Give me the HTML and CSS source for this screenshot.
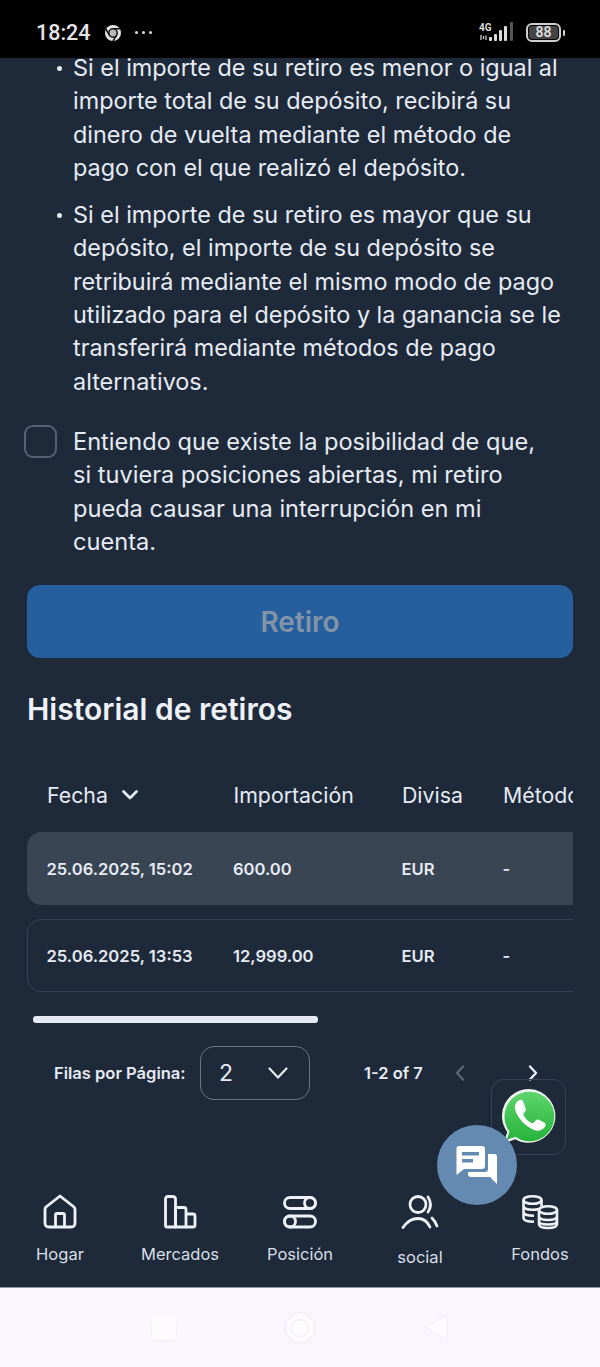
FILE: index.html
```html
<!doctype html>
<html lang="es">
  <head>
    <meta charset="UTF-8" />
    <meta name="viewport" content="width=device-width, initial-scale=1.0" />
    <title>Retiro</title>
    <link rel="stylesheet" href="styles.css">
  </head>
  <body>
    <div class="screen">
      <div class="status-bar">
        <div class="status-left">
          <span class="clock">18:24</span>
          <svg class="chrome-icon" width="18" height="18" viewBox="0 0 18 18">
            <circle cx="9" cy="9" r="8" fill="#e2e2e2" />
            <path d="M9 4.800 H16.400 M5.400 11.100 L1.700 4.800 M12.600 11.100 L8.900 17.400" stroke="#111" stroke-width="1.500" />
            <circle cx="9" cy="9" r="4.200" fill="#b8b8b8" stroke="#111" stroke-width="1.500" />
          </svg>
          <span class="dots"><i></i><i></i><i></i></span>
        </div>
        <div class="status-right">
          <svg width="38" height="22" viewBox="0 0 38 22">
            <text x="0" y="8.500" class="net-label">4G</text>
            <path d="M2 13 v5 M4.500 14 v3 M7 13.500 v4.500" stroke="#ccc" stroke-width="1.300" />
            <rect x="10" y="15" width="3" height="4" rx="1" fill="#ddd" />
            <rect x="15" y="12" width="3" height="7" rx="1" fill="#ddd" />
            <rect x="20" y="8" width="3" height="11" rx="1" fill="#ddd" />
            <rect x="25" y="4" width="3" height="15" rx="1" fill="#ddd" />
            <rect x="31" y="0" width="3" height="19" rx="1" fill="#555" />
          </svg>
          <div class="battery"><span class="battery-level">88</span></div>
          <i class="battery-tip"></i>
        </div>
      </div>

      <main class="content">
        <ul class="notes">
          <li>Si el importe de su retiro es menor o igual al importe total de su depósito, recibirá su dinero de vuelta mediante el método de pago con el que realizó el depósito.</li>
          <li>Si el importe de su retiro es mayor que su depósito, el importe de su depósito se retribuirá mediante el mismo modo de pago utilizado para el depósito y la ganancia se le transferirá mediante métodos de pago alternativos.</li>
        </ul>

        <label class="confirm">
          <span class="checkbox"></span>
          <span class="confirm-text">Entiendo que existe la posibilidad de que, si tuviera posiciones abiertas, mi retiro pueda causar una interrupción en mi cuenta.</span>
        </label>

        <button class="submit">Retiro</button>

        <h2 class="history-title">Historial de retiros</h2>

        <div class="table-wrap">
          <div class="table-head table-grid">
            <div class="sort-cell">
              Fecha
              <svg width="18" height="12" viewBox="0 0 18 12" fill="none" stroke="#e6eaf2" stroke-width="2.800" stroke-linecap="round" stroke-linejoin="round"><path d="M2.500 2.500 L9 9 L15.500 2.500" /></svg>
            </div>
            <div>Importación</div>
            <div>Divisa</div>
            <div>Método</div>
          </div>
          <div class="table-row table-grid active">
            <div>25.06.2025, 15:02</div>
            <div>600.00</div>
            <div>EUR</div>
            <div>-</div>
          </div>
          <div class="table-row table-grid">
            <div>25.06.2025, 13:53</div>
            <div>12,999.00</div>
            <div>EUR</div>
            <div>-</div>
          </div>
        </div>

        <div class="scroll-track"><div class="scroll-thumb"></div></div>

        <div class="pagination">
          <span class="rows-label">Filas por Página:</span>
          <div class="rows-select">
            <span>2</span>
            <svg width="22" height="14" viewBox="0 0 22 14" fill="none" stroke="#e6eaf2" stroke-width="2.200" stroke-linecap="round" stroke-linejoin="round"><path d="M2.500 2.500 L11 11.500 L19.500 2.500" /></svg>
          </div>
          <span class="page-range">1-2 of 7</span>
          <svg class="page-prev" width="12" height="18" viewBox="0 0 12 18" fill="none" stroke="#5b6675" stroke-width="2.400" stroke-linecap="round" stroke-linejoin="round"><path d="M9 2.500 L3 9 L9 15.500" /></svg>
          <svg class="page-next" width="12" height="18" viewBox="0 0 12 18" fill="none" stroke="#e6eaf2" stroke-width="2.400" stroke-linecap="round" stroke-linejoin="round"><path d="M3 2.500 L9 9 L3 15.500" /></svg>
        </div>
      </main>

      <nav class="tabbar">
        <div class="tab">
          <svg width="36" height="36" viewBox="0 0 36 36" fill="none" stroke="#eef1f6" stroke-width="2.800" stroke-linejoin="round">
            <path d="M3 15.500 Q3 14 4 13 L18 2 L32 13 Q33 14 33 15.500 V29 Q33 33 29 33 H7 Q3 33 3 29 Z" />
            <path d="M13.500 33 V21 Q13.500 19.500 15 19.500 H21 Q22.500 19.500 22.500 21 V33" />
          </svg>
          <span>Hogar</span>
        </div>
        <div class="tab">
          <svg width="36" height="36" viewBox="0 0 36 36" fill="none" stroke="#eef1f6" stroke-width="2.800" stroke-linejoin="round">
            <path d="M3.500 5 Q3.500 2.500 6 2.500 H10 Q13.500 2.500 13.500 5 V33 H5 Q3.500 33 3.500 31.500 Z" />
            <path d="M13.500 33 V13.500 H22 Q24 13.500 24 15.500 V33 Z" />
            <path d="M24 20 H31 Q33 20 33 22 V31 Q33 33 31 33 H24" />
          </svg>
          <span>Mercados</span>
        </div>
        <div class="tab">
          <svg width="36" height="36" viewBox="0 0 36 36" fill="none" stroke="#eef1f6" stroke-width="2.800">
            <rect x="2.500" y="3.500" width="31" height="11" rx="5.500" />
            <circle cx="28" cy="9" r="5.500" />
            <rect x="2.500" y="22" width="31" height="11" rx="5.500" />
            <circle cx="8" cy="27.500" r="5.500" />
          </svg>
          <span>Posición</span>
        </div>
        <div class="tab tab-social">
          <svg width="38" height="36" viewBox="0 0 38 36" fill="none" stroke="#eef1f6" stroke-width="2.800" stroke-linecap="round">
            <circle cx="17" cy="10.500" r="8" />
            <path d="M27 3 Q32 10.500 27 18" />
            <path d="M2 33.500 Q8 24.500 17 24.500 Q25 24.500 29 33" />
            <path d="M31 24 Q34 27 36 32" />
          </svg>
          <span>social</span>
        </div>
        <div class="tab">
          <svg width="38" height="36" viewBox="0 0 38 36" fill="none" stroke="#eef1f6" stroke-width="2.600">
            <ellipse cx="11.500" cy="6" rx="9" ry="3.800" />
            <path d="M2.500 6 V24 Q2.500 27.500 13 27.800 M20.500 6 V12 M2.500 12 Q3 15.800 11.500 15.800 Q15 15.800 17.500 15 M2.500 18 Q3 21.800 13 21.800" />
            <ellipse cx="27" cy="16" rx="9" ry="3.800" />
            <path d="M18 16 V30 Q18 34 27 34 Q36 34 36 30 V16 M18 22 Q18 26 27 26 Q36 26 36 22 M18 27 Q18 30.500 27 30.500 Q36 30.500 36 27" />
          </svg>
          <span>Fondos</span>
        </div>
      </nav>

      <div class="system-nav">
        <i class="sys-square"></i>
        <svg width="34" height="34" viewBox="0 0 34 34" fill="none">
          <circle cx="17" cy="17" r="15" fill="#fdfafe" stroke="#f5eff6" stroke-width="2" />
          <circle cx="17" cy="17" r="8.500" fill="#fefdfe" stroke="#f5eff6" stroke-width="1.500" />
        </svg>
        <svg width="26" height="30" viewBox="0 0 26 30"><path d="M24 2 V28 L2 14 Z" fill="#fefbff" stroke="#f6f0f7" stroke-width="1.500" stroke-linejoin="round" /></svg>
      </div>

      <a class="whatsapp">
        <svg width="60" height="60" viewBox="0 0 58 58">
          <defs>
            <linearGradient id="wa-bg" x1="0" y1="0" x2="0" y2="1">
              <stop offset="0" stop-color="#5fd56d" />
              <stop offset="1" stop-color="#26b33a" />
            </linearGradient>
          </defs>
          <path d="M29 2 A26 26 0 1 1 15.500 50.500 L4 55 L8 43.500 A26 26 0 0 1 29 2 Z" fill="#eef5ee" />
          <path d="M29 4.500 A24 24 0 1 1 15.800 48.200 L7.500 51 L10.200 43 A24 24 0 0 1 29 4.500 Z" fill="url(#wa-bg)" />
          <path d="M20 12.500 C17 13.500 15 17 15.500 21 C16.500 28 25.500 39 35.500 42 C39.500 43 43.500 41 45 37.500 C45.500 36 45 35 44 34.500 L38 31.500 C37 31 36 31.500 35.500 32.300 L33.500 34.500 C33 35 32 35 31 34.500 C27.500 32.800 25.500 30.500 23.800 27.300 C23.300 26.400 23.500 25.800 24 25.300 L25.500 23.300 C26 22.700 26.200 22 25.800 21 L23.300 14 C22.800 12.700 21.300 12.200 20 12.500 Z" fill="#fff" />
        </svg>
      </a>

      <a class="chat-fab">
        <svg width="44" height="40" viewBox="0 0 44 40" fill="#fff">
          <path d="M4 1 H27 Q30 1 30 4 V21 Q30 24 27 24 H9 L1.500 30 V4 Q1.500 1 4 1 Z" />
          <path d="M33 9 H39 Q42 9 42 12 V39 L35 32 H16 Q13 32 13 29 V27 H30 Q33 27 33 24 Z" />
          <rect x="7" y="7" width="17" height="3.500" fill="#648ab1" />
          <rect x="7" y="14" width="11" height="3.500" fill="#648ab1" />
        </svg>
      </a>
    </div>
  </body>
</html>
```

FILE: styles.css
```css
* {
  box-sizing: border-box;
}
body {
  margin: 0;
  background-color: #1e2a3a;
  font-family: Inter, "Noto Sans", sans-serif;
  color: #e6eaf2;
}
.screen {
  position: relative;
  width: 600px;
  height: 1367px;
  display: flex;
  flex-direction: column;
  overflow: hidden;
}

/* phone status bar */
.status-bar {
  height: 58px;
  flex-shrink: 0;
  background-color: #000;
  display: flex;
  justify-content: space-between;
  align-items: center;
  padding: 7px 35px 0 36px;
}
.status-left,
.status-right {
  display: flex;
  align-items: center;
}
.clock {
  font-family: Roboto, sans-serif;
  font-size: 21.500px;
  font-weight: 500;
  color: #e4e4e4;
}
.chrome-icon {
  margin-left: 13px;
}
.dots {
  display: flex;
  gap: 4px;
  margin-left: 13px;
}
.dots i {
  width: 3px;
  height: 3px;
  border-radius: 50%;
  background-color: #ddd;
}
.net-label {
  font-family: Roboto, sans-serif;
  font-size: 10px;
  font-weight: 700;
  fill: #ddd;
}
.battery {
  width: 35px;
  height: 19px;
  margin-left: 9px;
  border: 2px solid #cfcfcf;
  border-radius: 6px;
  padding: 1px;
  display: flex;
}
.battery-level {
  flex: 1;
  background-color: #444;
  border-radius: 3px;
  font-family: Roboto, sans-serif;
  font-size: 14px;
  font-weight: 500;
  line-height: 13px;
  text-align: center;
  color: #e4e4e4;
}
.battery-tip {
  width: 2px;
  height: 6px;
  margin-left: 2px;
  background-color: #cfcfcf;
  border-radius: 1px;
}

/* page content */
.content {
  flex: 1;
  min-height: 0;
  overflow: hidden;
  padding: 0 27px;
}
.notes {
  list-style: none;
  margin: -7px 0 0;
  padding: 0 8px 0 46px;
  font-size: 23.400px;
  line-height: 33.300px;
}
.notes li {
  position: relative;
  margin-bottom: 14px;
}
.notes li::before {
  content: "";
  position: absolute;
  left: -16px;
  top: 15px;
  width: 5px;
  height: 5px;
  border-radius: 50%;
  background-color: #e6eaf2;
}
.confirm {
  display: flex;
  gap: 16px;
  margin-top: 27px;
  font-size: 23.600px;
  line-height: 33.300px;
}
.confirm-text {
  padding-right: 26px;
}
.checkbox {
  flex-shrink: 0;
  width: 33px;
  height: 33px;
  margin-left: -3px;
  border: 2px solid #566273;
  border-radius: 9px;
}
.submit {
  display: block;
  width: 100%;
  height: 73px;
  margin-top: 27px;
  border: none;
  border-radius: 13px;
  background-color: #265f9e;
  color: #8194a8;
  font-family: inherit;
  font-size: 28px;
  font-weight: 600;
}
.history-title {
  margin: 32px 0 0;
  font-size: 30px;
  font-weight: 600;
  line-height: 38px;
  color: #eef1f6;
}

/* withdrawals table, cut off on the right */
.table-wrap {
  width: 546px;
  margin-top: 48px;
  overflow: hidden;
}
.table-grid {
  display: grid;
  grid-template-columns: 186.500px 168.500px 101px 200px;
  width: 700px;
  padding-left: 20px;
  align-items: center;
}
.table-head {
  height: 37px;
  font-size: 21.300px;
}
.sort-cell {
  display: flex;
  align-items: center;
  gap: 13px;
}
.table-row {
  height: 73px;
  margin-top: 14px;
  border: 1.500px solid #364354;
  border-radius: 14px;
  padding-left: 18.500px;
  font-size: 16.600px;
  font-weight: 600;
}
.table-head + .table-row {
  margin-top: 19px;
}
.table-row.active {
  background-color: #394553;
  border-color: #394553;
}
.scroll-track {
  margin: 24px 0 0 6px;
}
.scroll-thumb {
  width: 285px;
  height: 7px;
  border-radius: 3px;
  background-color: #e6eaf2;
}

/* pagination */
.pagination {
  display: flex;
  align-items: center;
  height: 54px;
  margin-top: 23px;
  padding-left: 27px;
}
.rows-label {
  width: 146px;
  font-size: 16.500px;
  font-weight: 600;
}
.rows-select {
  width: 110px;
  height: 54px;
  border: 1.500px solid #6a7584;
  border-radius: 14px;
  display: flex;
  justify-content: space-between;
  align-items: center;
  padding: 0 20px 0 18px;
  font-size: 23px;
}
.page-range {
  margin-left: 54px;
  font-size: 16.500px;
  font-weight: 600;
}
.page-prev {
  margin-left: 31px;
}
.page-next {
  margin-left: 61px;
}

/* bottom tabs */
.tabbar {
  height: 123px;
  flex-shrink: 0;
  display: grid;
  grid-template-columns: repeat(5, 120px);
  padding-top: 29px;
  border-bottom: 1px solid #8b95a5;
}
.tab {
  display: flex;
  flex-direction: column;
  align-items: center;
  gap: 14px;
  font-size: 16.500px;
  color: #d9dee6;
}
.tab-social span {
  margin-top: 3px;
}

/* android buttons */
.system-nav {
  height: 79px;
  flex-shrink: 0;
  background-color: #fbf6fd;
  display: grid;
  grid-template-columns: 136px 136px 136px;
  justify-content: center;
  justify-items: center;
  align-items: center;
}
.sys-square {
  width: 24px;
  height: 24px;
  border-radius: 4px;
  background-color: #fefbff;
  box-shadow: 0 1px 2px #f1e9f2;
}

/* floating buttons */
.whatsapp {
  position: absolute;
  left: 491px;
  top: 1079px;
  width: 75px;
  height: 76px;
  border: 1.500px solid #364354;
  border-radius: 13px;
  display: flex;
  align-items: center;
  justify-content: center;
}
.chat-fab {
  position: absolute;
  left: 437px;
  top: 1125px;
  width: 80px;
  height: 80px;
  border-radius: 50%;
  background-color: #648ab1;
  display: flex;
  align-items: center;
  justify-content: center;
}
```
